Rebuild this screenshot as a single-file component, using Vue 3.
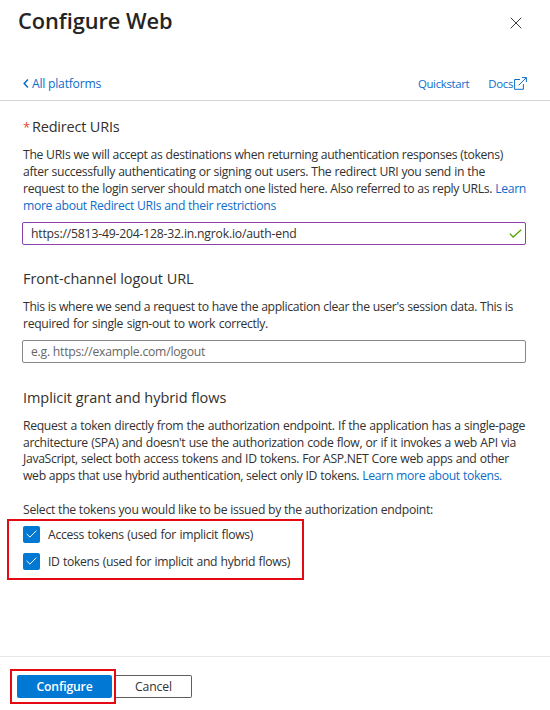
<script setup>
import { ref } from 'vue'

const redirectUri = ref('https://5813-49-204-128-32.in.ngrok.io/auth-end')
const logoutUrl = ref('')

const redirectText = [
  { text: 'The URIs we will accept as destinations when returning authentication responses (tokens)', width: 480 },
  { text: 'after successfully authenticating or signing out users. The redirect URI you send in the', width: 462 },
  { text: 'request to the login server should match one listed here. Also referred to as reply URLs.', link: 'Learn', width: 503 },
  { link: 'more about Redirect URIs and their restrictions', width: 253 }
]
const logoutText = [
  { text: "This is where we send a request to have the application clear the user's session data. This is", width: 490 },
  { text: 'required for single sign-out to work correctly.', width: 245 }
]
const grantText = [
  { text: 'Request a token directly from the authorization endpoint. If the application has a single-page', width: 502 },
  { text: "architecture (SPA) and doesn't use the authorization code flow, or if it invokes a web API via", width: 493 },
  { text: 'JavaScript, select both access tokens and ID tokens. For ASP.NET Core web apps and other', width: 486 },
  { text: 'web apps that use hybrid authentication, select only ID tokens.', link: 'Learn more about tokens.', width: 479 }
]
const tokens = ref([
  { label: 'Access tokens (used for implicit flows)', width: 205, checked: true },
  { label: 'ID tokens (used for implicit and hybrid flows)', width: 242, checked: true }
])
</script>

<template>
  <div class="panel">
    <header class="head">
      <h1>Configure Web</h1>
      <svg class="close" viewBox="0 0 12 12"><path d="M.7.7 11.3 11.3M11.3.7.7 11.3" /></svg>
    </header>

    <nav class="bar">
      <a class="back">
        <svg class="chevron" viewBox="0 0 6 9"><path d="M4.9.6 1.2 4.5 4.9 8.4" /></svg>
        <span>All platforms</span>
      </a>
      <a class="quick">Quickstart</a>
      <a class="docs">
        <span>Docs</span>
        <svg class="external" viewBox="0 0 13 13"><path d="M6 2.5H.6v9.8h8.8V7M4.8 8.2 12.1.8M8 .6h4.4V5" /></svg>
      </a>
    </nav>

    <main class="content">
      <section class="redirect">
        <h2><span class="star">*</span><span class="h-redirect">Redirect URIs</span></h2>
        <div class="copy">
          <p v-for="(l, i) in redirectText" :key="i" :style="{ width: l.width + 'px' }">{{ l.text }} <a v-if="l.link">{{ l.link }}</a></p>
        </div>
        <div class="field active">
          <input v-model="redirectUri" type="text" spellcheck="false" />
          <svg class="valid" viewBox="0 0 13 9"><path d="M.8 4.6 4.2 8 12.2.7" /></svg>
        </div>
      </section>

      <section class="logout">
        <h2>Front-channel logout URL</h2>
        <div class="copy">
          <p v-for="(l, i) in logoutText" :key="i" :style="{ width: l.width + 'px' }">{{ l.text }}</p>
        </div>
        <div class="field">
          <input v-model="logoutUrl" type="text" placeholder="e.g. https://example.com/logout" />
        </div>
      </section>

      <section class="grant">
        <h2>Implicit grant and hybrid flows</h2>
        <div class="copy">
          <p v-for="(l, i) in grantText" :key="i" :style="{ width: l.width + 'px' }">{{ l.text }} <a v-if="l.link">{{ l.link }}</a></p>
        </div>
        <p class="select">Select the tokens you would like to be issued by the authorization endpoint:</p>
      </section>

      <div class="tokens">
        <label v-for="t in tokens" :key="t.label" class="token">
          <span class="box"><svg v-if="t.checked" viewBox="0 0 11 8"><path d="M.6 3.9 3.9 7.1 10.4.7" /></svg></span>
          <span class="caption" :style="{ width: t.width + 'px' }">{{ t.label }}</span>
        </label>
      </div>
    </main>

    <footer class="foot">
      <div class="callout"><button class="primary">Configure</button></div>
      <button class="cancel">Cancel</button>
    </footer>
  </div>
</template>

<style>
body {
  background: #fff;
}
</style>

<style scoped>
* {
  box-sizing: border-box;
}
.panel {
  width: 550px;
  height: 710px;
  display: flex;
  flex-direction: column;
  background: #fff;
  color: #323130;
  font-family: 'Open Sans', 'Noto Sans', sans-serif;
  font-size: 12.2px;
  letter-spacing: -0.33px;
  overflow: hidden;
}
h1, h2, p {
  margin: 0;
}
svg {
  display: block;
  fill: none;
  stroke: currentColor;
  flex: none;
}
a {
  color: #0f6cc9;
}
.head {
  display: flex;
  justify-content: space-between;
  height: 66px;
  padding: 6px 28px 0 18px;
}
h1 {
  font-size: 21.8px;
  line-height: 30px;
  font-weight: 600;
  letter-spacing: -0.05px;
  color: #252423;
}
.close {
  width: 12px;
  height: 12px;
  margin-top: 11px;
  color: #3b3a39;
}
.bar {
  display: flex;
  height: 35px;
  padding: 8px 23px 0 23px;
  border-bottom: 1px solid #d4d4d4;
  line-height: 20px;
}
.back {
  display: flex;
  gap: 3px;
  flex: 1;
  letter-spacing: -0.24px;
}
.chevron {
  width: 6px;
  height: 9px;
  margin-top: 5px;
  stroke-width: 1.5;
}
.quick {
  font-size: 11.4px;
  margin-right: 19px;
}
.docs {
  display: flex;
  gap: 1px;
  font-size: 11.4px;
}
.external {
  width: 13px;
  height: 13px;
  margin-top: 3px;
}
.content {
  flex: 1;
  padding: 16px 23px 0;
}
h2 {
  font-size: 14.5px;
  line-height: 20px;
  font-weight: 400;
  letter-spacing: -0.06px;
  white-space: nowrap;
}
.star {
  display: inline-block;
  width: 9px;
  font-size: 13px;
  color: #e8442f;
}
.h-redirect {
  letter-spacing: -0.2px;
}
.copy {
  padding-top: 10px;
}
.copy p {
  line-height: 16.75px;
  white-space: nowrap;
  text-align: justify;
  text-align-last: justify;
}
.redirect .copy {
  padding-top: 10.4px;
}
.redirect .field {
  margin-top: 7.6px;
}
.field {
  display: flex;
  align-items: center;
  width: 504px;
  height: 23px;
  margin: 8px 0 0 -1px;
  padding: 0 4px 0 8px;
  border: 1px solid #8a8886;
  border-radius: 2px;
}
.active {
  padding-right: 3px;
  border-color: #8f3fae;
}
input {
  flex: 1;
  min-width: 0;
  padding: 0;
  border: 0;
  outline: 0;
  background: none;
  color: #323130;
  font: inherit;
  letter-spacing: -0.19px;
}
input::placeholder {
  color: #686664;
  opacity: 1;
  letter-spacing: -0.26px;
  letter-spacing: -0.24px;
}
.valid {
  width: 13px;
  height: 9px;
  color: #57a300;
  stroke-width: 1.3;
}
.logout {
  padding-top: 24px;
}
.logout .copy {
  padding-top: 10.3px;
}
.logout .field {
  margin-top: 7.2px;
}
.grant {
  padding-top: 25px;
}
.select {
  padding-top: 16px;
  line-height: 17px;
  white-space: nowrap;
  letter-spacing: -0.25px;
}
.tokens {
  width: 297px;
  height: 61px;
  margin: 1px 0 0 -16px;
  padding: 5px 0 0 14px;
  border: 2px solid #e50914;
}
.token {
  display: flex;
  align-items: center;
  gap: 8px;
  height: 17px;
  margin-bottom: 10px;
}
.box {
  display: flex;
  align-items: center;
  justify-content: center;
  width: 17px;
  height: 17px;
  border-radius: 2px;
  background: #0078d4;
  color: #fff;
}
.box svg {
  width: 11px;
  height: 8px;
}
.caption {
  white-space: nowrap;
  text-align: justify;
  text-align-last: justify;
}
.foot {
  display: flex;
  height: 54px;
  padding: 12px 0 0 10px;
  border-top: 1px solid #e6e6e6;
}
.callout {
  width: 106px;
  height: 35px;
  padding: 4px 2px 0 5px;
  border: 2px solid #e50914;
}
button {
  font: inherit;
  letter-spacing: -0.15px;
  padding: 0 0 1px;
  height: 23px;
  border-radius: 2px;
}
.primary {
  display: block;
  width: 95px;
  border: 0;
  background: #0078d4;
  color: #fff;
  font-weight: 600;
}
.cancel {
  width: 76px;
  margin-top: 6px;
  border: 1px solid #605e5c;
  border-left: 0;
  border-radius: 0 2px 2px 0;
  background: #fff;
  color: #323130;
}
</style>
